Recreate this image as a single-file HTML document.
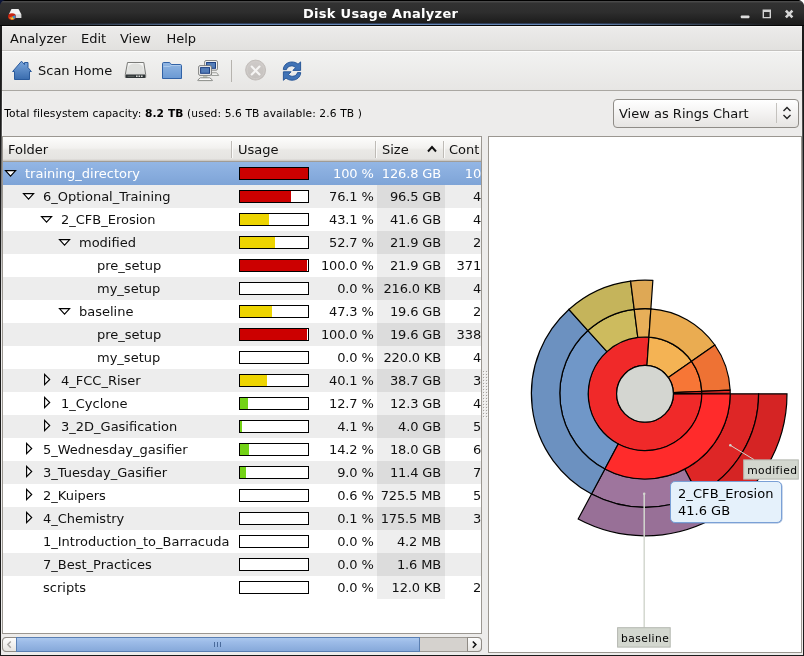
<!DOCTYPE html><html><head><meta charset="utf-8"><title>Disk Usage Analyzer</title><style>
html,body{margin:0;padding:0;}
body{width:804px;height:656px;position:relative;overflow:hidden;background:#edeceb;font-family:"DejaVu Sans", "Liberation Sans", sans-serif;font-size:13px;color:#111;}
#root{position:absolute;left:0;top:0;width:804px;height:656px;will-change:transform;}
.abs{position:absolute;}
.t{position:absolute;white-space:nowrap;line-height:16px;margin-top:1px;}
#title{left:0;top:0;width:804px;height:26px;background:linear-gradient(#000 0,#000 1px,#4c4c4c 1px,#484848 2px,#323232 3px,#2e2e2e 12px,#1f1f1f 21px,#1b1b1b 26px);}
#title .t{color:#fff;font-weight:bold;font-size:13px;}
#menubar{left:2px;top:26px;width:800px;height:24px;background:linear-gradient(#f5f5f4 0,#f5f5f4 1px,#ecebea 1px,#e2e1df 24px);border-bottom:1px solid #c4c2bf;}
#toolbar{left:2px;top:51px;width:800px;height:39px;background:linear-gradient(#fbfbfa 0,#fbfbfa 1px,#f2f2f1 1px,#e7e6e4 39px);border-bottom:1px solid #aaa7a2;}
.row{position:absolute;left:3px;width:478px;height:23px;}
.row.g{background:#ededed;}
.row.sel{background:linear-gradient(#93b6e5,#7ea4d7);color:#fff;}
.szc{position:absolute;left:374px;width:68px;top:0;height:23px;}
.row.w .szc{background:#eeeeee;}
.row.g .szc{background:#dcdcdc;}
.row .t{top:3px;}
.row .n{letter-spacing:-0.15px;}
.bar{position:absolute;left:236px;top:5px;width:68px;height:11px;border:1px solid #000;background:#fff;}
.bar i{position:absolute;left:0;top:0;height:11px;display:block;}
.hdr{position:absolute;top:137px;height:25px;background:linear-gradient(#fdfdfc 0,#f2f1ef 11px,#eae9e6 13px,#e5e4e1 22px,#cdcac5 23.5px);border-bottom:1px solid #a09c96;box-sizing:border-box;}
.hdr .t{top:4px;}
.lbl{position:absolute;background:#d4d6d1;border:1px solid #b9bbb6;font-size:11.5px;line-height:16px;height:16px;padding:0 3px;white-space:nowrap;}
</style></head><body><div id="root">
<div class="abs" style="left:0;top:0;width:804px;height:656px;background:#1b1b1b;"></div>
<div class="abs" style="left:1px;top:26px;width:802px;height:629px;background:#edeceb;"></div>
<div class="abs" style="left:1px;top:26px;width:1px;height:629px;background:linear-gradient(#1b1b1b 0,#1b1b1b 34px,#edeceb 280px);"></div>
<div class="abs" style="left:802px;top:26px;width:1px;height:629px;background:linear-gradient(#1b1b1b 0,#1b1b1b 34px,#edeceb 280px);"></div>
<div class="abs" style="left:2px;top:91px;width:1px;height:45px;background:#f8f8f7;"></div>
<div id="title" class="abs"><div class="abs" style="left:0;top:23px;width:804px;height:1px;background:linear-gradient(to right,rgba(60,85,130,0) 4%,rgba(60,85,130,0.6) 28%,rgba(60,85,130,0.6) 72%,rgba(60,85,130,0) 96%);"></div><div class="abs" style="left:0;top:24px;width:804px;height:1px;background:linear-gradient(to right,#1b1b1b 3%,#6687b5 28%,#6687b5 72%,#1b1b1b 97%);"></div><div class="abs" style="left:0;top:25px;width:804px;height:1px;background:#050505;"></div>
<div class="t" style="left:303px;top:5px;letter-spacing:0.29px;">Disk Usage Analyzer</div>
</div>
<div id="menubar" class="abs">
<div class="t" style="left:8px;top:4px;">Analyzer</div>
<div class="t" style="left:79px;top:4px;">Edit</div>
<div class="t" style="left:118px;top:4px;">View</div>
<div class="t" style="left:164.4px;top:4px;">Help</div>
</div>
<div id="toolbar" class="abs">
<div class="t" style="left:36px;top:11px;">Scan Home</div>
</div>
<svg class="abs" style="left:0;top:0" width="804" height="96" viewBox="0 0 804 96">
<defs>
<linearGradient id="hg" x1="0" y1="0" x2="0" y2="1"><stop offset="0" stop-color="#7aa6dc"/><stop offset="1" stop-color="#3a6cae"/></linearGradient>
<linearGradient id="dg" x1="0" y1="0" x2="0" y2="1"><stop offset="0" stop-color="#fafaf9"/><stop offset="1" stop-color="#d2d3d0"/></linearGradient>
<linearGradient id="fg" x1="0" y1="0" x2="0" y2="1"><stop offset="0" stop-color="#93b7e3"/><stop offset="1" stop-color="#6a99d3"/></linearGradient>
<linearGradient id="sg" x1="0" y1="0" x2="0" y2="1"><stop offset="0" stop-color="#cfcbc9"/><stop offset="1" stop-color="#c4c0bd"/></linearGradient>
</defs>
<!-- window corner -->
<path d="M0,0 H5 Q1,1 0,5 Z" fill="#0b1436"/>
<path d="M804,0 H799 Q803,1 804,5 Z" fill="#fff"/>
<!-- app icon -->
<path d="M11.5,9 H18.5 L21.2,14 V18 H9 V14 Z" fill="#f2f2f2"/>
<rect x="9" y="14.3" width="12.2" height="3.7" fill="#d6d6d6"/>
<ellipse cx="12" cy="16.6" rx="4" ry="3.4" fill="#c8230f"/>
<path d="M12,16.6 L15.2,15.2 A3.4,3 0 0 1 14,19 Z" fill="#3b8fc9"/>
<path d="M12,16.6 L14,19 A3.4,3 0 0 1 10.6,19.3 Z" fill="#e8d23a"/>
<path d="M12,16.6 L10.6,19.3 A3.4,3 0 0 1 9,17.5 Z" fill="#e07a2a"/>
<!-- window buttons -->
<rect x="740.8" y="15.4" width="8.6" height="2.8" rx="0.8" fill="#dddddd"/>
<path d="M762.6,9.5 H771 V18.2 H762.6 Z M764,12 V16.9 H769.6 V12 Z" fill="#d2d2d2" fill-rule="evenodd"/>
<path d="M785.9,10.6 L792.4,17.3 M792.4,10.6 L785.9,17.3" stroke="#d6d6d6" stroke-width="2.6" stroke-linecap="butt" fill="none"/>
<!-- home -->
<path d="M21.5,61.2 L12.6,71.5 H14.5 V79.5 H29.5 V71.5 H31.4 L28,67.6 V62.5 H24.5 V64.6 Z" fill="url(#hg)" stroke="#2a5a9c" stroke-width="1" stroke-linejoin="round"/>
<!-- drive -->
<path d="M127.5,62.5 H143.8 L145.7,74.5 V77.5 H125.3 V74.5 Z" fill="url(#dg)" stroke="#7b7c79" stroke-width="1" stroke-linejoin="round"/>
<ellipse cx="135.5" cy="68" rx="7.5" ry="4.6" fill="#dfe0dd"/>
<path d="M125.8,74.6 H145.2 V77 Q145.2,78 144.2,78 H126.8 Q125.8,78 125.8,77 Z" fill="#2e3436"/>
<path d="M127.5,76.3 H134.5" stroke="#6b706c" stroke-width="0.8"/>
<path d="M136,76.3 h1.6 m0.9,0 h1.6 m0.9,0 h1.6" stroke="#d8d9d6" stroke-width="1.6"/>
<!-- folder -->
<path d="M162.5,78.5 V63.7 Q162.5,62.5 163.7,62.5 H169 Q170,62.5 170.6,63.4 L171.3,64.5 H180.3 Q181.5,64.5 181.5,65.7 V78.5 Z" fill="url(#fg)" stroke="#3162a6" stroke-width="1" stroke-linejoin="round"/>
<path d="M163.5,66.5 H169.5 L171,65.5 H180.5" stroke="#b4cfee" stroke-width="1" fill="none" opacity="0.8"/>
<!-- network -->
<g stroke-linejoin="round">
<path d="M211.5,72.8 h5.2 l2,2.6 h-7.2 z" fill="#fbfbfa" stroke="#8a8c88" stroke-width="0.9"/>
<rect x="204.7" y="60.6" width="12.7" height="9.5" rx="1.2" fill="#ffffff" stroke="#7a7a78"/>
<rect x="206.6" y="62.5" width="8.9" height="5.8" fill="#547db8" stroke="#1d3f80" stroke-width="1" stroke-linejoin="miter"/>
<path d="M203,76 h4.4 v1.8 h-4.4 z" fill="#b9c0b2"/>
<path d="M200.4,77.8 h9.4 l2.6,2.2 q0.3,0.6 -0.5,0.6 h-13.6 q-0.8,0 -0.5,-0.6 z" fill="#fbfbfa" stroke="#7f817d" stroke-width="0.9"/>
<rect x="198.7" y="65.7" width="12.6" height="9.6" rx="1.2" fill="#ffffff" stroke="#777775"/>
<rect x="200.6" y="67.6" width="8.9" height="5.7" fill="#547db8" stroke="#1d3f80" stroke-width="1" stroke-linejoin="miter"/>
</g>
<!-- separator -->
<rect x="231" y="60" width="1" height="22" fill="#b6b3ae"/>
<!-- stop disabled -->
<circle cx="255.6" cy="70.1" r="10" fill="url(#sg)" stroke="#bfbbb8" stroke-width="0.9"/>
<circle cx="255.6" cy="70.1" r="8.6" fill="none" stroke="#d2cfcc" stroke-width="0.7"/>
<path d="M251.7,66.6 L259.5,74.5 M259.5,66.6 L251.7,74.5" stroke="#f6f5f4" stroke-width="2.1" stroke-linecap="round" fill="none"/>
<!-- refresh -->
<g fill="#4173b6" stroke="#1f4f92" stroke-width="0.9" stroke-linejoin="round">
<path id="rf" d="M283.3,69.6 C283.5,65 287.5,61.9 292,62 C294.5,62 296.5,62.8 298,64.2 L300.6,61.9 V70.4 H292.9 L295.5,67.7 C294.5,66.5 293,65.9 291.6,65.9 C289,65.9 287,67.4 286.5,69.6 Z"/>
<path d="M283.3,69.6 C283.5,65 287.5,61.9 292,62 C294.5,62 296.5,62.8 298,64.2 L300.6,61.9 V70.4 H292.9 L295.5,67.7 C294.5,66.5 293,65.9 291.6,65.9 C289,65.9 287,67.4 286.5,69.6 Z" transform="rotate(180 292 71.1)"/>
</g>
</svg>
<div class="t" style="left:4.2px;top:105px;font-size:10.67px;letter-spacing:0.115px;color:#000;">Total filesystem capacity: <b>8.2 TB</b> (used: 5.6 TB available: 2.6 TB )</div>
<div class="abs" style="left:613px;top:99px;width:184px;height:27px;border:1px solid #8f8c87;border-radius:4px;background:linear-gradient(#ffffff,#f3f2f1 50%,#e6e4e2);box-sizing:content-box;"></div>
<div class="t" style="left:619px;top:105px;">View as Rings Chart</div>
<div class="abs" style="left:776px;top:103px;width:1px;height:20px;background:#c4c2be;"></div>
<svg class="abs" style="left:780.5px;top:105px" width="12" height="16" viewBox="0 0 12 16"><path d="M2.5,6 L6,2.5 L9.5,6 M2.5,10 L6,13.5 L9.5,10" fill="none" stroke="#222" stroke-width="1.4"/></svg>
<div class="abs" style="left:2px;top:136px;width:478px;height:496px;border:1px solid #9b9791;background:#fff;"></div>
<div class="hdr" style="left:3px;width:230px;overflow:hidden;"><div class="t" style="left:5px;">Folder</div></div>
<div class="hdr" style="left:233px;width:144px;overflow:hidden;"><div class="t" style="left:5px;">Usage</div></div>
<div class="hdr" style="left:377px;width:67px;overflow:hidden;"><div class="t" style="left:5px;">Size</div></div>
<div class="hdr" style="left:444px;width:37px;overflow:hidden;"><div class="t" style="left:5px;">Cont</div></div>
<div class="abs" style="left:231px;top:141px;width:1px;height:17px;background:#bebbb6;"></div><div class="abs" style="left:232px;top:141px;width:1px;height:17px;background:#fbfbfa;"></div>
<div class="abs" style="left:375px;top:141px;width:1px;height:17px;background:#bebbb6;"></div><div class="abs" style="left:376px;top:141px;width:1px;height:17px;background:#fbfbfa;"></div>
<div class="abs" style="left:443px;top:141px;width:1px;height:17px;background:#bebbb6;"></div><div class="abs" style="left:444px;top:141px;width:1px;height:17px;background:#fbfbfa;"></div>
<svg class="abs" style="left:426px;top:144px" width="12" height="10" viewBox="0 0 12 10"><path d="M2,7.5 L6,3 L10,7.5" fill="none" stroke="#111" stroke-width="1.9"/></svg>
<div class="row sel" style="top:162px;overflow:hidden;">
<svg class="abs" style="left:0px;top:6px" width="16" height="12" viewBox="0 0 16 12"><path d="M2.5,2.6 H12.6 L7.55,8.1 Z" fill="#fff" stroke="#000" stroke-width="1.15" stroke-linejoin="miter"/></svg>
<div class="t" style="left:22px;">training_directory</div>
<div class="bar"><i style="width:68px;background:#cc0000;"></i></div>
<div class="t n" style="right:107.39999999999998px;">100 %</div>
<div class="t n" style="right:40px;">126.8 GB</div>
<div class="t" style="right:-0.4px;">10</div>
</div>
<div class="row g" style="top:185px;overflow:hidden;">
<div class="szc"></div>
<svg class="abs" style="left:18px;top:6px" width="16" height="12" viewBox="0 0 16 12"><path d="M2.5,2.6 H12.6 L7.55,8.1 Z" fill="#fff" stroke="#000" stroke-width="1.15" stroke-linejoin="miter"/></svg>
<div class="t" style="left:40px;">6_Optional_Training</div>
<div class="bar"><i style="width:51px;background:#cc0000;"></i></div>
<div class="t n" style="right:107.39999999999998px;">76.1 %</div>
<div class="t n" style="right:40px;">96.5 GB</div>
<div class="t" style="right:-0.4px;">4</div>
</div>
<div class="row w" style="top:208px;overflow:hidden;">
<div class="szc"></div>
<svg class="abs" style="left:36px;top:6px" width="16" height="12" viewBox="0 0 16 12"><path d="M2.5,2.6 H12.6 L7.55,8.1 Z" fill="#fff" stroke="#000" stroke-width="1.15" stroke-linejoin="miter"/></svg>
<div class="t" style="left:58px;">2_CFB_Erosion</div>
<div class="bar"><i style="width:29px;background:#edd400;"></i></div>
<div class="t n" style="right:107.39999999999998px;">43.1 %</div>
<div class="t n" style="right:40px;">41.6 GB</div>
<div class="t" style="right:-0.4px;">4</div>
</div>
<div class="row g" style="top:231px;overflow:hidden;">
<div class="szc"></div>
<svg class="abs" style="left:54px;top:6px" width="16" height="12" viewBox="0 0 16 12"><path d="M2.5,2.6 H12.6 L7.55,8.1 Z" fill="#fff" stroke="#000" stroke-width="1.15" stroke-linejoin="miter"/></svg>
<div class="t" style="left:76px;">modified</div>
<div class="bar"><i style="width:35px;background:#edd400;"></i></div>
<div class="t n" style="right:107.39999999999998px;">52.7 %</div>
<div class="t n" style="right:40px;">21.9 GB</div>
<div class="t" style="right:-0.4px;">2</div>
</div>
<div class="row w" style="top:254px;overflow:hidden;">
<div class="szc"></div>
<div class="t" style="left:94px;">pre_setup</div>
<div class="bar"><i style="width:67px;background:#cc0000;"></i></div>
<div class="t n" style="right:107.39999999999998px;">100.0 %</div>
<div class="t n" style="right:40px;">21.9 GB</div>
<div class="t" style="right:-0.4px;">371</div>
</div>
<div class="row g" style="top:277px;overflow:hidden;">
<div class="szc"></div>
<div class="t" style="left:94px;">my_setup</div>
<div class="bar"><i style="width:0px;background:#fff;"></i></div>
<div class="t n" style="right:107.39999999999998px;">0.0 %</div>
<div class="t n" style="right:40px;">216.0 KB</div>
<div class="t" style="right:-0.4px;">4</div>
</div>
<div class="row w" style="top:300px;overflow:hidden;">
<div class="szc"></div>
<svg class="abs" style="left:54px;top:6px" width="16" height="12" viewBox="0 0 16 12"><path d="M2.5,2.6 H12.6 L7.55,8.1 Z" fill="#fff" stroke="#000" stroke-width="1.15" stroke-linejoin="miter"/></svg>
<div class="t" style="left:76px;">baseline</div>
<div class="bar"><i style="width:32px;background:#edd400;"></i></div>
<div class="t n" style="right:107.39999999999998px;">47.3 %</div>
<div class="t n" style="right:40px;">19.6 GB</div>
<div class="t" style="right:-0.4px;">2</div>
</div>
<div class="row g" style="top:323px;overflow:hidden;">
<div class="szc"></div>
<div class="t" style="left:94px;">pre_setup</div>
<div class="bar"><i style="width:67px;background:#cc0000;"></i></div>
<div class="t n" style="right:107.39999999999998px;">100.0 %</div>
<div class="t n" style="right:40px;">19.6 GB</div>
<div class="t" style="right:-0.4px;">338</div>
</div>
<div class="row w" style="top:346px;overflow:hidden;">
<div class="szc"></div>
<div class="t" style="left:94px;">my_setup</div>
<div class="bar"><i style="width:0px;background:#fff;"></i></div>
<div class="t n" style="right:107.39999999999998px;">0.0 %</div>
<div class="t n" style="right:40px;">220.0 KB</div>
<div class="t" style="right:-0.4px;">4</div>
</div>
<div class="row g" style="top:369px;overflow:hidden;">
<div class="szc"></div>
<svg class="abs" style="left:38px;top:3px" width="12" height="16" viewBox="0 0 12 16"><path d="M3.6,2.4 V12.6 L8.7,7.5 Z" fill="#fff" stroke="#000" stroke-width="1.15" stroke-linejoin="miter"/></svg>
<div class="t" style="left:58px;">4_FCC_Riser</div>
<div class="bar"><i style="width:27px;background:#edd400;"></i></div>
<div class="t n" style="right:107.39999999999998px;">40.1 %</div>
<div class="t n" style="right:40px;">38.7 GB</div>
<div class="t" style="right:-0.4px;">3</div>
</div>
<div class="row w" style="top:392px;overflow:hidden;">
<div class="szc"></div>
<svg class="abs" style="left:38px;top:3px" width="12" height="16" viewBox="0 0 12 16"><path d="M3.6,2.4 V12.6 L8.7,7.5 Z" fill="#fff" stroke="#000" stroke-width="1.15" stroke-linejoin="miter"/></svg>
<div class="t" style="left:58px;">1_Cyclone</div>
<div class="bar"><i style="width:8px;background:#73d216;"></i></div>
<div class="t n" style="right:107.39999999999998px;">12.7 %</div>
<div class="t n" style="right:40px;">12.3 GB</div>
<div class="t" style="right:-0.4px;">4</div>
</div>
<div class="row g" style="top:415px;overflow:hidden;">
<div class="szc"></div>
<svg class="abs" style="left:38px;top:3px" width="12" height="16" viewBox="0 0 12 16"><path d="M3.6,2.4 V12.6 L8.7,7.5 Z" fill="#fff" stroke="#000" stroke-width="1.15" stroke-linejoin="miter"/></svg>
<div class="t" style="left:58px;">3_2D_Gasification</div>
<div class="bar"><i style="width:2px;background:#73d216;"></i></div>
<div class="t n" style="right:107.39999999999998px;">4.1 %</div>
<div class="t n" style="right:40px;">4.0 GB</div>
<div class="t" style="right:-0.4px;">5</div>
</div>
<div class="row w" style="top:438px;overflow:hidden;">
<div class="szc"></div>
<svg class="abs" style="left:20px;top:3px" width="12" height="16" viewBox="0 0 12 16"><path d="M3.6,2.4 V12.6 L8.7,7.5 Z" fill="#fff" stroke="#000" stroke-width="1.15" stroke-linejoin="miter"/></svg>
<div class="t" style="left:40px;">5_Wednesday_gasifier</div>
<div class="bar"><i style="width:9px;background:#73d216;"></i></div>
<div class="t n" style="right:107.39999999999998px;">14.2 %</div>
<div class="t n" style="right:40px;">18.0 GB</div>
<div class="t" style="right:-0.4px;">6</div>
</div>
<div class="row g" style="top:461px;overflow:hidden;">
<div class="szc"></div>
<svg class="abs" style="left:20px;top:3px" width="12" height="16" viewBox="0 0 12 16"><path d="M3.6,2.4 V12.6 L8.7,7.5 Z" fill="#fff" stroke="#000" stroke-width="1.15" stroke-linejoin="miter"/></svg>
<div class="t" style="left:40px;">3_Tuesday_Gasifier</div>
<div class="bar"><i style="width:6px;background:#73d216;"></i></div>
<div class="t n" style="right:107.39999999999998px;">9.0 %</div>
<div class="t n" style="right:40px;">11.4 GB</div>
<div class="t" style="right:-0.4px;">7</div>
</div>
<div class="row w" style="top:484px;overflow:hidden;">
<div class="szc"></div>
<svg class="abs" style="left:20px;top:3px" width="12" height="16" viewBox="0 0 12 16"><path d="M3.6,2.4 V12.6 L8.7,7.5 Z" fill="#fff" stroke="#000" stroke-width="1.15" stroke-linejoin="miter"/></svg>
<div class="t" style="left:40px;">2_Kuipers</div>
<div class="bar"><i style="width:0px;background:#fff;"></i></div>
<div class="t n" style="right:107.39999999999998px;">0.6 %</div>
<div class="t n" style="right:40px;">725.5 MB</div>
<div class="t" style="right:-0.4px;">5</div>
</div>
<div class="row g" style="top:507px;overflow:hidden;">
<div class="szc"></div>
<svg class="abs" style="left:20px;top:3px" width="12" height="16" viewBox="0 0 12 16"><path d="M3.6,2.4 V12.6 L8.7,7.5 Z" fill="#fff" stroke="#000" stroke-width="1.15" stroke-linejoin="miter"/></svg>
<div class="t" style="left:40px;">4_Chemistry</div>
<div class="bar"><i style="width:0px;background:#fff;"></i></div>
<div class="t n" style="right:107.39999999999998px;">0.1 %</div>
<div class="t n" style="right:40px;">175.5 MB</div>
<div class="t" style="right:-0.4px;">3</div>
</div>
<div class="row w" style="top:530px;overflow:hidden;">
<div class="szc"></div>
<div class="t" style="left:40px;">1_Introduction_to_Barracuda</div>
<div class="bar"><i style="width:0px;background:#fff;"></i></div>
<div class="t n" style="right:107.39999999999998px;">0.0 %</div>
<div class="t n" style="right:40px;">4.2 MB</div>
<div class="t" style="right:-0.4px;"></div>
</div>
<div class="row g" style="top:553px;overflow:hidden;">
<div class="szc"></div>
<div class="t" style="left:40px;">7_Best_Practices</div>
<div class="bar"><i style="width:0px;background:#fff;"></i></div>
<div class="t n" style="right:107.39999999999998px;">0.0 %</div>
<div class="t n" style="right:40px;">1.6 MB</div>
<div class="t" style="right:-0.4px;"></div>
</div>
<div class="row w" style="top:576px;overflow:hidden;">
<div class="szc"></div>
<div class="t" style="left:40px;">scripts</div>
<div class="bar"><i style="width:0px;background:#fff;"></i></div>
<div class="t n" style="right:107.39999999999998px;">0.0 %</div>
<div class="t n" style="right:40px;">12.0 KB</div>
<div class="t" style="right:-0.4px;">2</div>
</div>
<div class="abs" style="left:2px;top:637px;width:480px;height:15px;background:#d5d2ce;border:1px solid #9d9993;border-radius:4px;box-sizing:border-box;"></div>
<div class="abs" style="left:2px;top:637px;width:15px;height:15px;border:1px solid #8f8b85;border-radius:4px 0 0 4px;box-sizing:border-box;background:linear-gradient(#fdfdfd,#e6e4e1);"></div>
<div class="abs" style="left:467px;top:637px;width:15px;height:15px;border:1px solid #8f8b85;border-radius:0 4px 4px 0;box-sizing:border-box;background:linear-gradient(#fdfdfd,#e6e4e1);"></div>
<div class="abs" style="left:16px;top:637px;width:404px;height:15px;border:1px solid #5a7fb2;box-sizing:border-box;background:linear-gradient(#abc8ee,#9dbce8 30%,#86a9da);"></div>
<svg class="abs" style="left:0px;top:637px" width="490" height="15" viewBox="0 0 490 15"><path d="M10.8,4.5 L7.8,7.6 L10.8,10.7" fill="none" stroke="#a5a3a0" stroke-width="1.4"/><path d="M472.8,4.5 L475.9,7.6 L472.8,10.7" fill="none" stroke="#111" stroke-width="1.5"/><path d="M214.5,5 v5 M217.5,5 v5 M220.5,5 v5" stroke="#4a6b9c" stroke-width="1"/></svg>
<div class="abs" style="left:488px;top:136px;width:312px;height:515px;border:1px solid #9b9791;background:#fff;"></div>
<svg class="abs" style="left:0;top:0" width="804" height="656" viewBox="0 0 804 656"><path d="M673.40,393.80 L701.80,393.80 A56.80,56.80 0 1 1 648.92,337.14 L646.96,365.47 A28.40,28.40 0 1 0 673.40,393.80 Z" fill="#f02929" stroke="#000" stroke-width="1.2" stroke-linejoin="miter"/>
<path d="M646.96,365.47 L648.92,337.14 A56.80,56.80 0 0 1 691.57,361.29 L668.29,377.54 A28.40,28.40 0 0 0 646.96,365.47 Z" fill="#f4b354" stroke="#000" stroke-width="1.2" stroke-linejoin="miter"/>
<path d="M668.29,377.54 L691.57,361.29 A56.80,56.80 0 0 1 701.75,391.30 L673.37,392.55 A28.40,28.40 0 0 0 668.29,377.54 Z" fill="#f77636" stroke="#000" stroke-width="1.2" stroke-linejoin="miter"/>
<path d="M673.37,392.55 L701.75,391.30 A56.80,56.80 0 0 1 701.80,393.44 L673.40,393.62 A28.40,28.40 0 0 0 673.37,392.55 Z" fill="#f02e2a" stroke="#000" stroke-width="1.2" stroke-linejoin="miter"/>
<path d="M618.27,443.92 L604.90,468.97 A85.20,85.20 0 0 1 587.92,330.55 L606.95,351.63 A56.80,56.80 0 0 0 618.27,443.92 Z" fill="#7097c8" stroke="#000" stroke-width="1.2" stroke-linejoin="miter"/>
<path d="M606.95,351.63 L587.92,330.55 A85.20,85.20 0 0 1 634.21,309.29 L637.81,337.46 A56.80,56.80 0 0 0 606.95,351.63 Z" fill="#cdbb5e" stroke="#000" stroke-width="1.2" stroke-linejoin="miter"/>
<path d="M637.81,337.46 L634.21,309.29 A85.20,85.20 0 0 1 650.88,308.80 L648.92,337.14 A56.80,56.80 0 0 0 637.81,337.46 Z" fill="#e7af59" stroke="#000" stroke-width="1.2" stroke-linejoin="miter"/>
<path d="M648.92,337.14 L650.88,308.80 A85.20,85.20 0 0 1 714.86,345.03 L691.57,361.29 A56.80,56.80 0 0 0 648.92,337.14 Z" fill="#eaac51" stroke="#000" stroke-width="1.2" stroke-linejoin="miter"/>
<path d="M691.57,361.29 L714.86,345.03 A85.20,85.20 0 0 1 730.12,390.05 L701.75,391.30 A56.80,56.80 0 0 0 691.57,361.29 Z" fill="#ee7234" stroke="#000" stroke-width="1.2" stroke-linejoin="miter"/>
<path d="M701.75,391.30 L730.12,390.05 A85.20,85.20 0 0 1 730.20,393.26 L701.80,393.44 A56.80,56.80 0 0 0 701.75,391.30 Z" fill="#e72d28" stroke="#000" stroke-width="1.2" stroke-linejoin="miter"/>
<path d="M730.20,393.80 L758.60,393.80 A113.60,113.60 0 0 1 697.94,494.31 L684.70,469.18 A85.20,85.20 0 0 0 730.20,393.80 Z" fill="#de2626" stroke="#000" stroke-width="1.2" stroke-linejoin="miter"/>
<path d="M684.70,469.18 L697.94,494.31 A113.60,113.60 0 0 1 591.53,494.03 L604.90,468.97 A85.20,85.20 0 0 0 684.70,469.18 Z" fill="#9e759d" stroke="#000" stroke-width="1.2" stroke-linejoin="miter"/>
<path d="M604.90,468.97 L591.53,494.03 A113.60,113.60 0 0 1 568.89,309.47 L587.92,330.55 A85.20,85.20 0 0 0 604.90,468.97 Z" fill="#6c91c0" stroke="#000" stroke-width="1.2" stroke-linejoin="miter"/>
<path d="M587.92,330.55 L568.89,309.47 A113.60,113.60 0 0 1 630.62,281.11 L634.21,309.29 A85.20,85.20 0 0 0 587.92,330.55 Z" fill="#c5b45b" stroke="#000" stroke-width="1.2" stroke-linejoin="miter"/>
<path d="M634.21,309.29 L630.62,281.11 A113.60,113.60 0 0 1 652.85,280.47 L650.88,308.80 A85.20,85.20 0 0 0 634.21,309.29 Z" fill="#dea855" stroke="#000" stroke-width="1.2" stroke-linejoin="miter"/>
<path d="M758.60,393.80 L787.00,393.80 A142.00,142.00 0 0 1 711.17,519.44 L697.94,494.31 A113.60,113.60 0 0 0 758.60,393.80 Z" fill="#d52424" stroke="#000" stroke-width="1.2" stroke-linejoin="miter"/>
<path d="M697.94,494.31 L711.17,519.44 A142.00,142.00 0 0 1 578.17,519.09 L591.53,494.03 A113.60,113.60 0 0 0 697.94,494.31 Z" fill="#987097" stroke="#000" stroke-width="1.2" stroke-linejoin="miter"/>
<path d="M701.80,393.80 L730.20,393.80 A85.20,85.20 0 0 1 604.90,468.97 L618.27,443.92 A56.80,56.80 0 0 0 701.80,393.80 Z" fill="#ff2b2b" stroke="#000" stroke-width="1.2" stroke-linejoin="miter"/>
<circle cx="645.0" cy="393.8" r="28.4" fill="#d4d6d1" stroke="#000" stroke-width="1.2"/>
<path d="M730.3,445.3 L754,459.6" stroke="#d3d7cf" stroke-width="1" fill="none"/><circle cx="730.3" cy="445.3" r="1.25" fill="#d3d7cf"/>
<path d="M644.2,493.8 V627.5" stroke="#d3d7cf" stroke-width="1.5" fill="none"/><circle cx="644.2" cy="493.8" r="1.25" fill="#d3d7cf"/>
<rect x="743.7" y="459.9" width="54.6" height="19.2" fill="#d3d7cf" stroke="#b4b7b0" stroke-width="1"/>
<rect x="617.6" y="627.7" width="52.6" height="19.4" fill="#d3d7cf" stroke="#b4b7b0" stroke-width="1"/>
<text x="747.2" y="474" font-family='"DejaVu Sans", "Liberation Sans", sans-serif' font-size="10.7" letter-spacing="0.42" fill="#000">modified</text>
<text x="621" y="642" font-family='"DejaVu Sans", "Liberation Sans", sans-serif' font-size="10.7" letter-spacing="0.42" fill="#000">baseline</text>
</svg>
<div class="abs" style="left:670px;top:481px;width:110px;height:40px;border:1px solid #7aa0d6;border-radius:5px;background:#e5f1fb;box-shadow:0.5px 0.5px 0 rgba(90,130,190,0.6);"></div>
<div class="t" style="left:678px;top:485px;color:#000;letter-spacing:0.08px;">2_CFB_Erosion</div><div class="t" style="left:678px;top:502px;color:#000;">41.6 GB</div>
<div class="abs" style="left:483px;top:371px;width:1px;height:46px;background:repeating-linear-gradient(#a3a09c 0,#a3a09c 1px,transparent 1px,transparent 3px);"></div>
<div class="abs" style="left:484px;top:372px;width:1px;height:46px;background:repeating-linear-gradient(#fbfbfa 0,#fbfbfa 1px,transparent 1px,transparent 3px);"></div>
<div class="abs" style="left:486px;top:371px;width:1px;height:46px;background:repeating-linear-gradient(#a3a09c 0,#a3a09c 1px,transparent 1px,transparent 3px);"></div>
<div class="abs" style="left:487px;top:372px;width:1px;height:46px;background:repeating-linear-gradient(#fbfbfa 0,#fbfbfa 1px,transparent 1px,transparent 3px);"></div>
</div></body></html>
